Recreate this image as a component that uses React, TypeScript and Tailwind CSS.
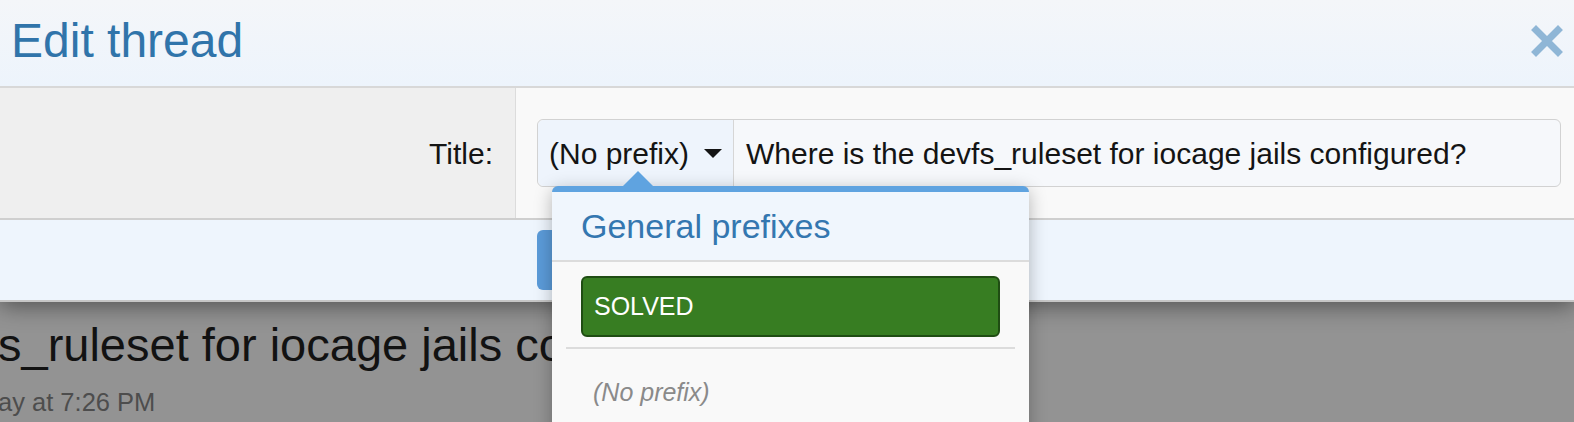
import React from 'react';

function CloseIcon() {
  return (
    <svg width="32" height="32" viewBox="0 0 32 32" aria-hidden="true">
      <path d="M5 5 L27 27 M27 5 L5 27" stroke="#8fb6d6" strokeWidth="7" strokeLinecap="square" fill="none" />
    </svg>
  );
}

function PrefixMenu() {
  return (
    <div className="absolute left-[14px] top-[66px] z-20 w-[477px] h-[260px] rounded-t-[6px] border-t-[6px] border-[#5fa3e0] bg-[#f9f9f9] shadow-[0_4px_18px_rgba(0,0,0,0.28)]">
      <span className="absolute -top-[21px] left-[71px] h-0 w-0 border-x-[15px] border-b-[15px] border-x-transparent border-b-[#5fa3e0]" />
      <div className="flex h-[70px] items-center border-b-2 border-[#dcdcdc] bg-[#f0f6fd] pl-[29px] text-[34px] text-[#3477b0]">
        General prefixes
      </div>
      <div className="px-[29px] pt-[14px]">
        <div className="flex h-[61px] items-center rounded-[6px] border-2 border-[#1f4d13] bg-[#377d22] pl-[11px] text-[25px] text-white">
          SOLVED
        </div>
      </div>
      <div className="mx-[14px] mt-[10px] h-[2px] bg-[#dcdcdc]" />
      <div className="pl-[41px] pt-[25px] text-[25px] italic text-[#8a8a8a]">(No prefix)</div>
    </div>
  );
}

export default function App() {
  return (
    <div className="relative h-[422px] w-[1574px] overflow-hidden bg-[#939393] font-['Liberation_Sans',Arial,sans-serif]">
      <div className="relative z-10 shadow-[0_4px_22px_rgba(0,0,0,0.45)]">
        <div className="flex h-[88px] items-center justify-between border-b-2 border-[#d8d8d8] bg-gradient-to-b from-[#f4f6f9] to-[#edf4fc] pl-[11px] pr-[11px]">
          <h1 className="pb-[5px] text-[48px] text-[#3074aa]">Edit thread</h1>
          <button type="button" className="mb-[4px]">
            <CloseIcon />
          </button>
        </div>
        <div className="flex h-[132px] border-b-2 border-[#cfcfcf]">
          <div className="flex w-[516px] items-center justify-end border-r border-[#dcdcdc] bg-[#efefef] pr-[22px] text-[30px] text-[#141414]">
            Title:
          </div>
          <div className="flex flex-1 items-center bg-[#f9f9f9] pl-[21px] pr-[13px]">
            <div className="relative flex h-[68px] flex-1 rounded-[6px] border border-[#d2d2d2] bg-[#f6f8fb]">
              <button
                type="button"
                className="flex w-[196px] items-center rounded-l-[6px] border-r border-[#d6d6d6] bg-[#eef4fc] pl-[11px] text-[30px] text-[#141414]"
              >
                (No prefix)
                <span className="ml-[15px] h-0 w-0 border-x-[9px] border-t-[9px] border-x-transparent border-t-[#141414]" />
              </button>
              <div className="flex flex-1 items-center pl-[12px] text-[30px] text-[#141414]">
                Where is the devfs_ruleset for iocage jails configured?
              </div>
              <PrefixMenu />
            </div>
          </div>
        </div>
        <div className="flex h-[82px] items-center border-b-2 border-[#c6c6c6] bg-[#eef5fd] pl-[537px]">
          <button type="button" className="h-[60px] w-[140px] rounded-[6px] bg-[#5b9bd9]" />
        </div>
      </div>
      <div className="-ml-[2px] pt-[15px]">
        <div className="whitespace-nowrap text-[47px] leading-[56px] text-[#121212]">s_ruleset for iocage jails configured?</div>
        <div className="mt-[15px] whitespace-nowrap text-[25.5px] leading-[28px] text-[#4d4d4d]">ay at 7:26 PM</div>
      </div>
    </div>
  );
}
